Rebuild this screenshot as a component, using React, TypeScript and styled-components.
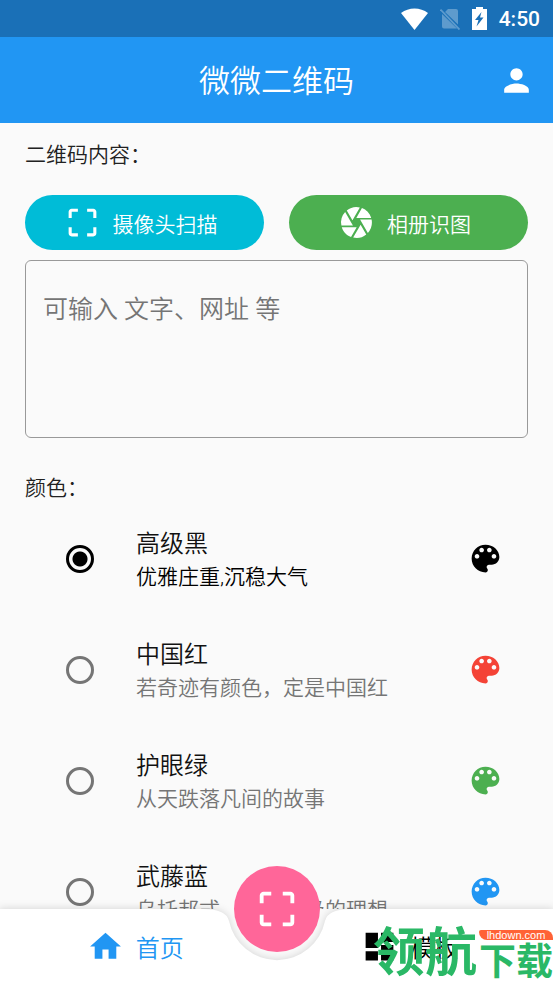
import React, { useState } from 'react';
import styled, { createGlobalStyle } from 'styled-components';
import { MdCamera, MdCropFree, MdDashboard, MdHome, MdPerson } from 'react-icons/md';

const GlobalStyle = createGlobalStyle`
  * { box-sizing: border-box; }
  body {
    margin: 0;
    background: #fafafa;
    color: #212121;
    font-family: Roboto, 'Noto Sans CJK SC', sans-serif;
    font-weight: 350;
  }
  button, textarea, input { font: inherit; margin: 0; }
`;

const Screen = styled.div`
  height: 100vh;
  display: flex;
  flex-direction: column;
  overflow: hidden;
`;

const StatusBar = styled.div`
  flex: none;
  height: 37px;
  padding: 0 13px 0 0;
  display: flex;
  align-items: center;
  justify-content: flex-end;
  background: #1a70b7;
  color: #fff;
`;

const StatusIcons = styled.div`
  display: flex;
  align-items: center;
  gap: 12px;
  margin-right: 12px;
`;

const Clock = styled.time`
  font-size: 21px;
  font-weight: 500;
  line-height: 24px;
`;

const AppBar = styled.header`
  flex: none;
  height: 86px;
  padding: 0 18px;
  display: grid;
  grid-template-columns: 37px 1fr 37px;
  align-items: center;
  background: #2196f3;
  color: #fff;
`;

const Title = styled.h1`
  grid-column: 2;
  margin: 0;
  padding-top: 3px;
  text-align: center;
  font-size: 31px;
  font-weight: inherit;
  line-height: 40px;
`;

const IconButton = styled.button`
  display: flex;
  padding: 0;
  border: 0;
  background: none;
  color: inherit;
`;

const Content = styled.main`
  flex: 1;
  min-height: 0;
  overflow: hidden;
`;

const Section = styled.section`
  display: flex;
  flex-direction: column;
  padding: 16px 25px 0;
`;

const SectionLabel = styled.label`
  font-size: 21px;
  line-height: 32px;
`;

const ScanActions = styled.div`
  display: flex;
  gap: 25px;
  margin: 24px 0 10px;
`;

const PillButton = styled.button<{ $color: string }>`
  flex: 1;
  height: 55px;
  display: flex;
  align-items: center;
  justify-content: center;
  gap: 12px;
  padding: 0 8px 0 0;
  border: 0;
  border-radius: 28px;
  background: ${(p) => p.$color};
  color: #fff;
  font-size: 21px;
`;

const ContentInput = styled.textarea`
  height: 178px;
  padding: 31px 17px;
  border: 1px solid #999;
  border-radius: 6px;
  background: transparent;
  resize: none;
  font-size: 25px;
  line-height: 36px;
  outline: none;
  &::placeholder { color: #757575; opacity: 1; }
`;

const ColorSection = styled.fieldset`
  margin: 0;
  padding: 35px 0 0;
  border: 0;
  min-width: 0;
`;

const ColorLegend = styled.legend`
  float: left;
  width: 100%;
  padding: 0 25px;
  font-size: 21px;
  line-height: 30px;
`;

const ColorRow = styled.label`
  clear: both;
  height: 111px;
  padding: 0 49px 0 66px;
  display: flex;
  align-items: center;
`;

const Radio = styled.input`
  appearance: none;
  flex: none;
  width: 28px;
  height: 28px;
  margin-right: 42px;
  border: 3px solid #757575;
  border-radius: 50%;
  &:checked {
    border-color: #000;
    background: radial-gradient(circle, #000 0 7px, transparent 8px);
  }
`;

const RowText = styled.span<{ $active: boolean }>`
  flex: 1;
  min-width: 0;
  padding-top: 3px;
  display: flex;
  flex-direction: column;
  color: ${(p) => (p.$active ? '#000' : '#757575')};
`;

const RowTitle = styled.span`
  color: #111;
  font-size: 24px;
  line-height: 34px;
`;

const RowSubtitle = styled.span`
  font-size: 21px;
  line-height: 32px;
`;

const Swatch = styled.svg`
  flex: none;
  width: 37px;
  height: 37px;
`;

const BottomBar = styled.nav`
  position: relative;
  flex: none;
  height: 74px;
`;

const BarSurface = styled.div`
  position: absolute;
  inset: 0;
  display: flex;
  filter: drop-shadow(0 0 4px rgba(0, 0, 0, 0.16));
`;

const BarSide = styled.div`
  flex: 1;
  margin: 0 -1px;
  background: #fff;
`;

const Tabs = styled.div`
  position: relative;
  height: 100%;
  padding-right: 8px;
  display: flex;
  gap: 4px;
`;

const Tab = styled.button<{ $active?: boolean }>`
  flex: 1;
  display: flex;
  align-items: center;
  justify-content: center;
  gap: 12px;
  padding: 0;
  border: 0;
  background: none;
  color: ${(p) => (p.$active ? '#2196f3' : '#000')};
  font-size: 24px;
`;

const ScanFab = styled.button`
  position: absolute;
  top: -43px;
  left: calc(50% - 43px);
  width: 86px;
  height: 86px;
  display: flex;
  align-items: center;
  justify-content: center;
  padding: 0;
  border: 0;
  border-radius: 50%;
  background: #ff6699;
  color: #fff;
`;

const Watermark = styled.div`
  position: absolute;
  right: 0;
  bottom: 4px;
  display: flex;
  align-items: flex-start;
  gap: 2px;
  color: #2ab866;
  font-family: 'Noto Sans CJK SC', sans-serif;
  font-weight: 700;
  white-space: nowrap;
  pointer-events: none;
`;

const WatermarkName = styled.span`
  font-size: 52px;
  line-height: 60px;
`;

const WatermarkSide = styled.span`
  display: flex;
  flex-direction: column;
  padding-top: 11px;
  font-size: 37px;
  line-height: 38px;
`;

const WatermarkSite = styled.span`
  border-radius: 2px 8px 0 8px;
  background: #ff6236;
  color: #fff;
  font-family: 'Liberation Sans', sans-serif;
  font-size: 11px;
  font-weight: 400;
  line-height: 10px;
  text-align: center;
`;

const PALETTE =
  'M12 3c-4.97 0-9 4.03-9 9s4.03 9 9 9c.83 0 1.5-.67 1.5-1.5 0-.39-.15-.74-.39-1.01-.23-.26-.38-.61-.38-.99 0-.83.67-1.5 1.5-1.5H16c2.76 0 5-2.24 5-5 0-4.42-4.03-8-9-8zm-5.5 9c-.83 0-1.5-.67-1.5-1.5S5.67 9 6.5 9 8 9.67 8 10.5 7.33 12 6.5 12zm3-4C8.67 8 8 7.33 8 6.5S8.67 5 9.5 5s1.5.67 1.5 1.5S10.33 8 9.5 8zm5 0c-.83 0-1.5-.67-1.5-1.5S13.67 5 14.5 5s1.5.67 1.5 1.5S15.33 8 14.5 8zm3 4c-.83 0-1.5-.67-1.5-1.5S16.67 9 17.5 9s1.5.67 1.5 1.5-.67 1.5-1.5 1.5z';

const colors = [
  { name: '高级黑', note: '优雅庄重,沉稳大气', value: '#000000' },
  { name: '中国红', note: '若奇迹有颜色，定是中国红', value: '#f44336' },
  { name: '护眼绿', note: '从天跌落凡间的故事', value: '#4caf50' },
  { name: '武藤蓝', note: '乌托邦式，爱情终极的理想', value: '#2196f3' },
];

export default function App() {
  const [selected, setSelected] = useState(colors[0].name);
  const [text, setText] = useState('');

  return (
    <>
      <GlobalStyle />
      <Screen>
        <StatusBar>
          <StatusIcons>
            <svg width="27" height="22" viewBox="0 0 27 22" aria-hidden="true">
              <path d="M13.5 22 0 5C4 2 8.500 .5 13.500 .5S23 2 27 5z" fill="#fff" />
            </svg>
            <svg width="20" height="22" viewBox="0 0 20 22" aria-hidden="true">
              <path d="M8 1h8a2 2 0 0 1 2 2v13.500L5 4zM2 6l15 14.500H4a2 2 0 0 1-2-2z" fill="#5e9bcd" />
              <path d="M.5 1.500 19.500 21.500" stroke="#5e9bcd" strokeWidth="1.800" />
            </svg>
            <svg width="15" height="23" viewBox="0 0 15 23" aria-hidden="true">
              <path d="M4 0h7v2h4v21H0V2h4zM9.500 5 3 13h3.500l-2 6.500 7-9H8z" fill="#fff" fillRule="evenodd" />
            </svg>
          </StatusIcons>
          <Clock>4:50</Clock>
        </StatusBar>
        <AppBar>
          <Title>微微二维码</Title>
          <IconButton type="button" aria-label="我的"><MdPerson size={37} /></IconButton>
        </AppBar>
        <Content>
          <Section>
            <SectionLabel htmlFor="qr-content">二维码内容：</SectionLabel>
            <ScanActions>
              <PillButton type="button" $color="#00bcd7"><MdCropFree size={37} />摄像头扫描</PillButton>
              <PillButton type="button" $color="#4caf50"><MdCamera size={37} />相册识图</PillButton>
            </ScanActions>
            <ContentInput
              id="qr-content"
              placeholder="可输入 文字、网址 等"
              value={text}
              onChange={(e) => setText(e.target.value)}
            />
          </Section>
          <ColorSection>
            <ColorLegend>颜色：</ColorLegend>
            {colors.map((c) => (
              <ColorRow key={c.name}>
                <Radio
                  type="radio"
                  name="color"
                  checked={selected === c.name}
                  onChange={() => setSelected(c.name)}
                />
                <RowText $active={selected === c.name}>
                  <RowTitle>{c.name}</RowTitle>
                  <RowSubtitle>{c.note}</RowSubtitle>
                </RowText>
                <Swatch viewBox="0 0 24 24" aria-hidden="true"><path d={PALETTE} fill={c.value} /></Swatch>
              </ColorRow>
            ))}
          </ColorSection>
        </Content>
        <BottomBar>
          <BarSurface>
            <BarSide />
            <svg width="150" height="74" viewBox="-75 0 150 74" aria-hidden="true">
              <path d="M-75 0h1Q-51 0-48 12A49 49 0 0 0 48 12Q51 0 74 0h1v74h-150z" fill="#fff" />
            </svg>
            <BarSide />
          </BarSurface>
          <Tabs>
            <Tab type="button" $active><MdHome size={37} />首页</Tab>
            <Tab type="button"><MdDashboard size={37} />模板</Tab>
          </Tabs>
          <ScanFab type="button" aria-label="扫描"><MdCropFree size={46} /></ScanFab>
          <Watermark>
            <WatermarkName>领航</WatermarkName>
            <WatermarkSide>
              <WatermarkSite>lhdown.com</WatermarkSite>
              下载
            </WatermarkSide>
          </Watermark>
        </BottomBar>
      </Screen>
    </>
  );
}
